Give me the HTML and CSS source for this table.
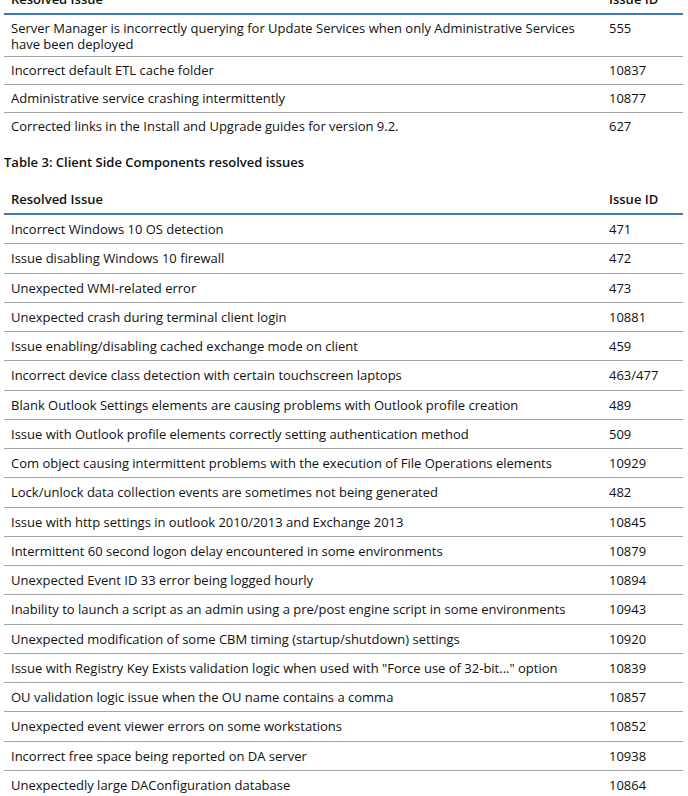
FILE: index.html
```html
<!DOCTYPE html>
<html>
<head>
<meta charset="utf-8">
<link rel="stylesheet" href="styles.css">
</head>
<body>
<div class="page">
  <table class="issues top">
    <thead>
      <tr><th class="c-issue">Resolved Issue</th><th class="c-id">Issue ID</th></tr>
    </thead>
    <tbody>
      <tr class="tall"><td>Server Manager is incorrectly querying for Update Services when only Administrative Services have been deployed</td><td>555</td></tr>
      <tr><td>Incorrect default ETL cache folder</td><td>10837</td></tr>
      <tr><td>Administrative service crashing intermittently</td><td>10877</td></tr>
      <tr><td>Corrected links in the Install and Upgrade guides for version 9.2.</td><td>627</td></tr>
    </tbody>
  </table>

  <p class="caption">Table 3: Client Side Components resolved issues</p>

  <table class="issues">
    <thead>
      <tr><th class="c-issue">Resolved Issue</th><th class="c-id">Issue ID</th></tr>
    </thead>
    <tbody>
      <tr><td>Incorrect Windows 10 OS detection</td><td>471</td></tr>
      <tr><td>Issue disabling Windows 10 firewall</td><td>472</td></tr>
      <tr><td>Unexpected WMI-related error</td><td>473</td></tr>
      <tr><td>Unexpected crash during terminal client login</td><td>10881</td></tr>
      <tr><td>Issue enabling/disabling cached exchange mode on client</td><td>459</td></tr>
      <tr><td>Incorrect device class detection with certain touchscreen laptops</td><td>463/477</td></tr>
      <tr><td>Blank Outlook Settings elements are causing problems with Outlook profile creation</td><td>489</td></tr>
      <tr><td>Issue with Outlook profile elements correctly setting authentication method</td><td>509</td></tr>
      <tr><td>Com object causing intermittent problems with the execution of File Operations elements</td><td>10929</td></tr>
      <tr><td>Lock/unlock data collection events are sometimes not being generated</td><td>482</td></tr>
      <tr><td>Issue with http settings in outlook 2010/2013 and Exchange 2013</td><td>10845</td></tr>
      <tr><td>Intermittent 60 second logon delay encountered in some environments</td><td>10879</td></tr>
      <tr><td>Unexpected Event ID 33 error being logged hourly</td><td>10894</td></tr>
      <tr><td>Inability to launch a script as an admin using a pre/post engine script in some environments</td><td>10943</td></tr>
      <tr><td>Unexpected modification of some CBM timing (startup/shutdown) settings</td><td>10920</td></tr>
      <tr><td>Issue with Registry Key Exists validation logic when used with "Force use of 32-bit..." option</td><td>10839</td></tr>
      <tr><td>OU validation logic issue when the OU name contains a comma</td><td>10857</td></tr>
      <tr><td>Unexpected event viewer errors on some workstations</td><td>10852</td></tr>
      <tr><td>Incorrect free space being reported on DA server</td><td>10938</td></tr>
      <tr><td>Unexpectedly large DAConfiguration database</td><td>10864</td></tr>
    </tbody>
  </table>
</div>
</body>
</html>
```
FILE: styles.css
```css
html, body {
  margin: 0;
  padding: 0;
  background: #ffffff;
}

body {
  font-family: "Open Sans", "Liberation Sans", sans-serif;
  color: #111111;
  font-size: 13px;
}

.page {
  padding: 0 5px 0 4px;
}

.issues {
  width: 679px;
  border-collapse: collapse;
  table-layout: fixed;
}

.issues .c-issue {
  width: 584px;
}

.issues th {
  text-align: left;
  font-weight: 600;
  font-size: 13px;
  line-height: 16px;
  padding: 0 7px 6px 7px;
  border-bottom: 2px solid #3b78b4;
}

.issues td {
  line-height: 16px;
  padding: 6.13px 7px;
  border-bottom: 1px solid #a4a4a4;
  vertical-align: top;
}

.issues tbody tr:last-child td {
  border-bottom: none;
}

.top {
  margin-top: -9px;
}

.top td {
  padding: 5px 7px 6px 7px;
}

.top .tall td {
  padding: 5px 7px 4px 7px;
}

.caption {
  margin: 14px 0 21px 0;
  font-weight: 600;
  font-size: 13px;
  line-height: 16px;
}
```
